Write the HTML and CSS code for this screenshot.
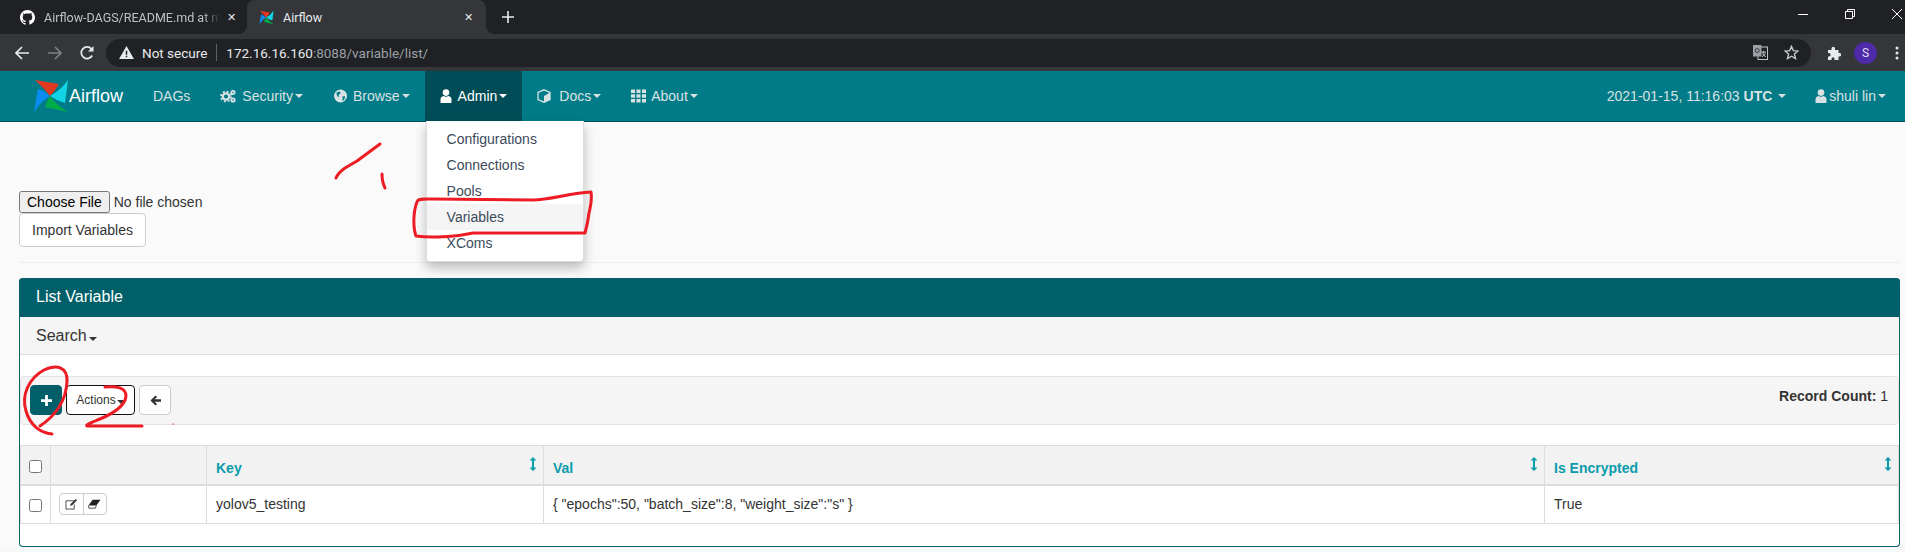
FILE: index.html
```html
<!DOCTYPE html>
<html lang="en">
<head>
	<meta charset="UTF-8" />
	<title>Airflow</title>
	<link rel="stylesheet" href="styles.css">
</head>
<body>
<svg class="sprite" width="0" height="0">
	<symbol id="pinwheel" viewBox="0 0 36 34">
		<path fill="#e43921" d="M2 1 L26 5 Q22 12 17 17 Q10 8 2 1Z"/>
		<path fill="#11d4e4" d="M35 1 L32 24 Q24 22 17 17 Q28 11 35 1Z"/>
		<path fill="#00ad46" d="M35 33 L12 28 Q14 22 17 17 Q24 27 35 33Z"/>
		<path fill="#0a8cf0" d="M1 33 L5 10 Q12 12 17 17 Q7 23 1 33Z"/>
	</symbol>
	<symbol id="user" viewBox="0 0 12 14">
		<circle cx="6" cy="3.6" r="3.3" fill="currentColor"/>
		<path fill="currentColor" d="M0.5 14 V10.5 Q0.5 7.6 3.6 7 Q6 8.6 8.4 7 Q11.5 7.6 11.5 10.5 V14Z"/>
	</symbol>
	<symbol id="sort" viewBox="0 0 8 14">
		<path fill="currentColor" d="M4 0 L7.5 3.5 H5 V10.5 H7.5 L4 14 L0.5 10.5 H3 V3.5 H0.5Z"/>
	</symbol>
</svg>

<div class="tabstrip">
	<div class="tab">
		<svg class="tab-icon" viewBox="0 0 16 16"><path fill="#fff" d="M8 0C3.6 0 0 3.6 0 8c0 3.5 2.3 6.5 5.5 7.6.4.1.5-.2.5-.4v-1.4c-2.2.5-2.7-1-2.7-1-.4-.9-.9-1.200-.9-1.200-.7-.5.1-.5.1-.5.8.1 1.200.8 1.200.8.7 1.200 1.900.9 2.300.7.1-.5.3-.9.5-1.100-1.800-.2-3.600-.9-3.600-4 0-.9.300-1.600.800-2.100-.1-.2-.4-1 .1-2.100 0 0 .7-.2 2.200.8.600-.2 1.300-.3 2-.3s1.400.1 2 .3c1.500-1 2.200-.8 2.200-.8.400 1.100.200 1.900.100 2.100.5.600.800 1.300.800 2.100 0 3.100-1.900 3.700-3.700 3.900.3.300.6.800.6 1.500v2.200c0 .2.100.5.600.4C13.700 14.500 16 11.500 16 8c0-4.400-3.600-8-8-8z"/></svg>
		<span class="tab-title tab-title-long">Airflow-DAGS/README.md at ma</span>
		<span class="tab-close">&#x2715;</span>
	</div>
	<div class="tab tab-active">
		<svg class="tab-icon"><use href="#pinwheel"/></svg>
		<span class="tab-title">Airflow</span>
		<span class="tab-close">&#x2715;</span>
	</div>
	<svg class="new-tab" viewBox="0 0 12 12"><path stroke="#e8eaed" stroke-width="1.6" d="M6 0V12M0 6H12"/></svg>
	<div class="window-controls">
		<svg class="win-icon" viewBox="0 0 10 10"><path stroke="#fff" d="M0 5.500H10"/></svg>
		<svg class="win-icon" viewBox="0 0 10 10"><path fill="none" stroke="#fff" d="M.5 2.500H7.500V9.500H.5ZM2.500 2.500V.5H9.500V7.500H7.500"/></svg>
		<svg class="win-icon" viewBox="0 0 10 10"><path stroke="#fff" d="M0 0L10 10M10 0L0 10"/></svg>
	</div>
</div>

<div class="toolbar">
	<svg class="tool-btn" viewBox="0 0 14 14"><path fill="none" stroke="#e8eaed" stroke-width="1.700" d="M14 7H1.500M7 1L1 7L7 13"/></svg>
	<svg class="tool-btn" viewBox="0 0 14 14"><path fill="none" stroke="#7c7f84" stroke-width="1.700" d="M0 7H12.500M7 1L13 7L7 13"/></svg>
	<svg class="tool-btn tool-reload" viewBox="0 0 14 14"><path fill="none" stroke="#e8eaed" stroke-width="1.700" d="M12.200 9.500A5.800 5.800 0 1 1 11.500 3"/><path fill="#e8eaed" d="M13.500 0V5.500H8Z"/></svg>
	<div class="omnibox">
		<svg class="warn" viewBox="0 0 16 14"><path fill="#e8eaed" d="M8 0L16 14H0Z"/><path fill="#202124" d="M7.200 5H8.800V9.500H7.200ZM7.200 10.500H8.800V12H7.200Z"/></svg>
		<span class="not-secure">Not secure</span>
		<span class="omni-sep"></span>
		<span class="url"><b>172.16.16.160</b>:8088/variable/list/</span>
		<span class="omni-right">
			<svg class="omni-icon" viewBox="0 0 15 15"><rect x="5" y="2" width="9.500" height="12.500" fill="none" stroke="#bdc1c6"/><rect width="8.500" height="11.500" fill="#9aa0a6"/><circle cx="4.200" cy="5.500" r="2" fill="none" stroke="#35363a"/><path stroke="#bdc1c6" d="M8 7H13M10.500 6V8M9 12L12.500 8M9.500 8L12.500 12"/></svg>
			<svg class="omni-icon" viewBox="0 0 15 15"><path fill="none" stroke="#c4c7cb" stroke-width="1.400" d="M7.500 1.300L9.300 5.600L14 6L10.400 9L11.500 13.600L7.500 11.200L3.500 13.600L4.600 9L1 6L5.700 5.600Z"/></svg>
		</span>
	</div>
	<svg class="puzzle" viewBox="0 0 14 14"><path fill="#e8eaed" d="M1 4H4.500V2.500A1.700 1.700 0 0 1 8 2.500V4H11.500V7H12.500A1.700 1.700 0 0 1 12.500 10.500H11.500V14H7.500V12.800A1.500 1.500 0 0 0 4.500 12.800V14H1V10.500H2.200A1.800 1.800 0 0 0 2.200 7H1Z"/></svg>
	<span class="avatar">S</span>
	<svg class="menu-dots" viewBox="0 0 4 14"><circle cx="2" cy="2" r="1.500" fill="#e8eaed"/><circle cx="2" cy="7" r="1.500" fill="#e8eaed"/><circle cx="2" cy="12" r="1.500" fill="#e8eaed"/></svg>
</div>

<nav class="navbar">
	<a class="brand"><svg class="brand-logo"><use href="#pinwheel"/></svg><span>Airflow</span></a>
	<ul class="nav-items">
		<li class="nav-item">DAGs</li>
		<li class="nav-item">
			<svg class="nav-icon nav-icon-cogs" viewBox="0 0 16 14"><circle cx="6" cy="7.500" r="3.200" fill="none" stroke="currentColor" stroke-width="2.200"/><circle cx="6" cy="7.500" r="5" fill="none" stroke="currentColor" stroke-width="1.800" stroke-dasharray="2 1.930"/><circle cx="13" cy="3.500" r="1.700" fill="none" stroke="currentColor" stroke-width="1.800"/><circle cx="13" cy="11" r="1.700" fill="none" stroke="currentColor" stroke-width="1.800"/></svg>
			Security<i class="caret"></i>
		</li>
		<li class="nav-item">
			<svg class="nav-icon" viewBox="0 0 14 14"><circle cx="7" cy="7" r="6.500" fill="currentColor"/><path fill="#017b87" d="M3 3.500L6.500 2.500L7 4.500L5 6L5.500 8.500L3.500 7ZM9 7.500L11.500 7L11 10.500L9 12Z"/></svg>
			Browse<i class="caret"></i>
		</li>
		<li class="nav-item nav-item-active">
			<svg class="nav-icon nav-icon-user"><use href="#user"/></svg>
			Admin<i class="caret"></i>
			<ul class="dropdown">
				<li class="dropdown-item">Configurations</li>
				<li class="dropdown-item">Connections</li>
				<li class="dropdown-item">Pools</li>
				<li class="dropdown-item dropdown-item-hover">Variables</li>
				<li class="dropdown-item">XComs</li>
			</ul>
		</li>
		<li class="nav-item">
			<svg class="nav-icon nav-icon-cube" viewBox="0 0 14 14"><path fill="none" stroke="currentColor" stroke-width="1.300" d="M7 .8L13 3.500V10.500L7 13.200L1 10.500V3.500Z"/><path fill="currentColor" d="M7 7L13 3.500V10.500L7 13.200Z"/></svg>
			Docs<i class="caret"></i>
		</li>
		<li class="nav-item">
			<svg class="nav-icon" viewBox="0 0 15 13"><path fill="currentColor" d="M0 0H4V3.500H0ZM5.500 0H9.500V3.500H5.500ZM11 0H15V3.500H11ZM0 4.750H4V8.250H0ZM5.500 4.750H9.500V8.250H5.500ZM11 4.750H15V8.250H11ZM0 9.500H4V13H0ZM5.500 9.500H9.500V13H5.500ZM11 9.500H15V13H11Z"/></svg>
			About<i class="caret"></i>
		</li>
	</ul>
	<div class="nav-right">
		<span class="clock">2021-01-15, 11:16:03 <b>UTC</b><i class="caret caret-clock"></i></span>
		<span class="account"><svg class="nav-icon nav-icon-account"><use href="#user"/></svg>shuli lin<i class="caret"></i></span>
	</div>
</nav>

<main class="content">
	<form class="import-form">
		<input class="file-input" type="file">
		<button class="btn btn-import" type="button">Import Variables</button>
	</form>
	<hr class="divider">

	<section class="panel">
		<h2 class="panel-title">List Variable</h2>
		<div class="search-bar">Search<i class="caret caret-dark"></i></div>

		<div class="well">
			<div class="well-actions">
				<button class="btn btn-add" type="button"><svg class="btn-icon" viewBox="0 0 12 12"><path fill="#fff" d="M4.500 0H7.500V4.500H12V7.500H7.500V12H4.500V7.500H0V4.500H4.500Z"/></svg></button>
				<button class="btn btn-actions" type="button">Actions<i class="caret caret-dark"></i></button>
				<button class="btn btn-back" type="button"><svg class="btn-icon" viewBox="0 0 12 12"><path fill="#333" d="M6 .5L7.700 2.200L5.100 4.700H12V7.300H5.100L7.700 9.800L6 11.500L.5 6Z"/></svg></button>
			</div>
			<div class="record-count"><b>Record Count:</b> 1</div>
		</div>

		<table class="list-table">
			<colgroup>
				<col class="col-check"><col class="col-row-actions"><col class="col-key"><col class="col-val"><col>
			</colgroup>
			<thead>
				<tr>
					<th><input class="row-check" type="checkbox"></th>
					<th></th>
					<th><div class="th-inner">Key<svg class="sort-icon"><use href="#sort"/></svg></div></th>
					<th><div class="th-inner">Val<svg class="sort-icon"><use href="#sort"/></svg></div></th>
					<th><div class="th-inner">Is Encrypted<svg class="sort-icon"><use href="#sort"/></svg></div></th>
				</tr>
			</thead>
			<tbody>
				<tr>
					<td><input class="row-check" type="checkbox"></td>
					<td class="row-actions">
						<div class="btn-group">
							<span class="btn-mini"><svg class="mini-icon" viewBox="0 0 14 13"><path fill="none" stroke="#444" d="M9.500 3H1V12H10V7"/><path fill="#333" d="M6 6.500L11.500 1L13 2.500L7.500 8L5.500 8.500Z"/></svg></span>
							<span class="btn-mini"><svg class="mini-icon" viewBox="0 0 14 11"><path fill="#222" d="M5 1H13.500L9 7H.5Z"/><path fill="none" stroke="#444" d="M.5 7L1 10H8L9 7"/></svg></span>
						</div>
					</td>
					<td>yolov5_testing</td>
					<td>{ "epochs":50, "batch_size":8, "weight_size":"s" }</td>
					<td>True</td>
				</tr>
			</tbody>
		</table>
	</section>
</main>

<!-- red marker scribbles on top of the screenshot -->
<svg class="scribbles" viewBox="0 0 1905 552">
	<g fill="none" stroke="#ed1c24" stroke-width="3" stroke-linecap="round" stroke-linejoin="round">
		<path d="M336 178Q338 173 345 168L357 161L380 144"/>
		<path d="M382 174Q382 182 385 188"/>
		<path d="M433 199C425 199 418 198 417 202C413 212 413 228 416 236C430 238 455 237 473 233L585 233Q588 222 589 213C591 205 592 198 591 192C570 193 550 200 533 200L433 199"/>
		<path d="M52 434C40 433 30 425 26 411C21 395 29 378 44 370C57 364 68 367 67 382C66 398 58 414 40 426"/>
		<path d="M105 387C118 386 126 388 126 396C125 407 112 414 100 419C93 422 85 425 87 426L142 426"/>
		<path stroke-width="1.200" d="M173 424L173.500 424"/>
	</g>
</svg>
</body>
</html>
```

FILE: styles.css
```css
html, body {
	margin: 0;
	height: 552px;
	overflow: hidden;
}
body {
	position: relative;
	font-family: "Liberation Sans", Arial, sans-serif;
	font-size: 14px;
	color: #333;
	background: #f7f8fa;
}
.sprite {
	display: block;
}

/* browser chrome */
.tabstrip {
	display: flex;
	align-items: center;
	height: 34px;
	background: #202124;
	font-family: Roboto, sans-serif;
	font-size: 12.5px;
	color: #bdc1c6;
}
.tab {
	display: flex;
	align-items: center;
	height: 34px;
	width: 247px;
	padding-left: 20px;
	box-sizing: border-box;
}
.tab-active {
	position: relative;
	width: 239px;
	padding-left: 12px;
	background: #35363a;
	border-radius: 8px 8px 0 0;
	color: #e8eaed;
}
.tab-active::before, .tab-active::after {
	content: "";
	position: absolute;
	bottom: 0;
	width: 8px;
	height: 8px;
}
.tab-active::before {
	left: -8px;
	background: radial-gradient(circle at 0 0, transparent 7.5px, #35363a 8px);
}
.tab-active::after {
	right: -8px;
	background: radial-gradient(circle at 100% 0, transparent 7.5px, #35363a 8px);
}
.tab-icon {
	width: 15px;
	height: 15px;
	flex: none;
}
.tab-title {
	margin-left: 9px;
	flex: 1;
}
.tab-title-long {
	flex: none;
	width: 176px;
	white-space: nowrap;
	-webkit-mask-image: linear-gradient(90deg, #000 90%, transparent);
	mask-image: linear-gradient(90deg, #000 90%, transparent);
}
.tab-close {
	width: 10px;
	margin: 0 12px 0 7px;
	font-size: 11px;
	color: #e8eaed;
}
.new-tab {
	width: 12px;
	height: 12px;
	margin-left: 16px;
}
.window-controls {
	display: flex;
	gap: 37px;
	margin-left: auto;
	margin-right: 3px;
	margin-bottom: 6px;
}
.win-icon {
	width: 10px;
	height: 10px;
}
.toolbar {
	display: flex;
	align-items: center;
	height: 37px;
	background: #35363a;
}
.tool-btn {
	width: 14px;
	height: 14px;
	margin-left: 14px;
	margin-right: 5px;
}
.tool-btn:first-child {
	margin-left: 15px;
}
.tool-reload {
	margin-left: 13px;
}
.omnibox {
	display: flex;
	align-items: center;
	width: 1705px;
	height: 28px;
	margin-left: 7px;
	padding: 0 10px 0 13px;
	box-sizing: border-box;
	border-radius: 14px;
	background: #202124;
	font-family: Roboto, sans-serif;
	font-size: 13.5px;
	color: #e8eaed;
}
.warn {
	width: 15px;
	height: 13px;
}
.not-secure {
	margin-left: 8px;
}
.omni-sep {
	width: 1px;
	height: 17px;
	margin: 0 9px;
	background: #5f6368;
}
.url {
	color: #9aa0a6;
}
.url b {
	font-weight: 400;
	color: #e8eaed;
}
.omni-right {
	display: flex;
	gap: 16px;
	margin-left: auto;
	margin-right: 2px;
}
.omni-icon {
	width: 15px;
	height: 15px;
}
.puzzle {
	width: 14px;
	height: 14px;
	margin-left: 16px;
}
.avatar {
	display: flex;
	align-items: center;
	justify-content: center;
	width: 23px;
	height: 22px;
	margin-left: 13px;
	border-radius: 50%;
	background: #4c2aa8;
	font-family: Roboto, sans-serif;
	font-size: 12px;
	color: #e0dcf5;
}
.menu-dots {
	width: 4px;
	height: 14px;
	margin-left: 18px;
}

/* airflow navbar */
.navbar {
	display: flex;
	height: 51px;
	box-sizing: border-box;
	border-bottom: 1px solid #00505a;
	background: #017b87;
	color: #d9e2e3;
}
.brand {
	display: flex;
	align-items: center;
	width: 138px;
	padding-left: 33px;
	box-sizing: border-box;
	color: #fff;
}
.brand span {
	font-size: 18px;
}
.brand-logo {
	width: 36px;
	height: 34px;
}
.nav-items {
	display: flex;
	margin: 0;
	padding: 0;
	list-style: none;
}
.nav-item {
	position: relative;
	display: flex;
	align-items: center;
	padding: 0 15px;
}
.nav-item-active {
	background: #004d57;
	color: #fff;
}
.nav-icon {
	width: 15px;
	height: 14px;
	margin-right: 5px;
}
.nav-icon-cogs {
	width: 16px;
	margin-right: 6px;
}
.nav-icon-cube {
	width: 14px;
	margin-right: 8px;
}
.nav-icon-user {
	width: 12px;
	margin-right: 6px;
}
.nav-icon-account {
	width: 12px;
	margin-right: 2px;
}
.caret {
	display: inline-block;
	width: 0;
	height: 0;
	margin-left: 2px;
	border-top: 4px solid currentColor;
	border-left: 4px solid transparent;
	border-right: 4px solid transparent;
}
.caret-clock {
	margin-left: 6px;
}
.caret-dark {
	color: #333;
}
.nav-right {
	display: flex;
	align-items: center;
	gap: 29px;
	margin-left: auto;
	margin-right: 19px;
}
.clock {
	display: flex;
	align-items: center;
	white-space: pre;
}
.account {
	display: flex;
	align-items: center;
}
.dropdown {
	position: absolute;
	z-index: 2;
	top: 50px;
	left: 1px;
	width: 158px;
	margin: 0;
	padding: 5px 0;
	list-style: none;
	background: #fff;
	border-radius: 0 0 4px 4px;
	box-shadow: 0 6px 12px rgba(0, 0, 0, .25);
	border: 1px solid #ddd;
	border-top: 0;
	box-sizing: border-box;
	color: #333;
}
.dropdown-item {
	height: 26px;
	padding-left: 20px;
	line-height: 26px;
	color: #3b4a5a;
}
.dropdown-item-hover {
	background: #f5f5f5;
}

/* page */
.content {
	padding: 69px 5px 0 19px;
	background: #fafafa;
	height: 355px;
}
.import-form {
	display: flex;
	flex-direction: column;
	align-items: flex-start;
}
.file-input {
	height: 22px;
	font-family: "Liberation Sans", Arial, sans-serif;
	font-size: 14px;
	color: #333;
}
.btn {
	font-family: "Liberation Sans", Arial, sans-serif;
	font-size: 14px;
	color: #333;
	background: #fff;
	border: 1px solid #ccc;
	border-radius: 4px;
	padding: 0;
	box-sizing: border-box;
}
.btn-import {
	width: 127px;
	height: 34px;
}
.divider {
	height: 1px;
	margin: 15px 0 15px;
	border: 0;
	background: #eee;
}
.panel {
	display: flow-root;
	height: 269px;
	box-sizing: border-box;
	border: 1px solid #00626b;
	border-top: 0;
	border-radius: 4px;
	background: #fff;
}
.panel-title {
	height: 39px;
	margin: 0 -1px;
	padding: 0 0 0 17px;
	border-radius: 4px 4px 0 0;
	background: #005f69;
	font-size: 16px;
	font-weight: 400;
	line-height: 38px;
	color: #fff;
}
.search-bar {
	height: 38px;
	padding-left: 16px;
	border-bottom: 1px solid #ddd;
	box-sizing: border-box;
	background: #f5f5f5;
	font-size: 16px;
	line-height: 37px;
}
.well {
	display: flex;
	justify-content: space-between;
	height: 49px;
	margin-top: 21px;
	padding: 8px 10px 0 9px;
	box-sizing: border-box;
	border: 1px solid #e3e3e3;
	border-radius: 4px;
	background: #f5f5f5;
}
.well-actions {
	display: flex;
	gap: 4px;
	align-items: flex-start;
}
.btn-add, .btn-back {
	display: flex;
	align-items: center;
	justify-content: center;
	width: 32px;
	height: 30px;
}
.btn-add {
	background: #005f69;
	border-color: #005f69;
}
.btn-actions {
	width: 69px;
	height: 30px;
	border-color: #111;
	font-size: 12px;
}
.btn-actions .caret {
	margin-left: 1px;
}
.btn-icon {
	width: 11px;
	height: 11px;
}
.record-count {
	margin-top: 3px;
}
.list-table {
	width: 100%;
	margin-top: 20px;
	table-layout: fixed;
	border-collapse: collapse;
}
.col-check {
	width: 30px;
}
.col-row-actions {
	width: 156px;
}
.col-key {
	width: 337px;
}
.col-val {
	width: 1001px;
}
.list-table th, .list-table td {
	border: 1px solid #ddd;
	padding: 6px 9px 0;
	text-align: left;
}
.list-table th {
	height: 39px;
	box-sizing: border-box;
	background: #f2f2f2;
	border-bottom-width: 2px;
	color: #0a9cab;
}
.list-table td {
	height: 39px;
	box-sizing: border-box;
	padding-top: 0;
}
.list-table td:first-child {
	padding: 0;
	text-align: center;
}
.list-table th:first-child {
	padding: 11px 0 0;
	text-align: center;
	vertical-align: top;
}
.list-table .row-actions {
	padding-left: 8px;
}
.th-inner {
	display: flex;
	justify-content: space-between;
	align-items: flex-start;
	height: 26px;
	line-height: 26px;
}
.sort-icon {
	width: 8px;
	height: 14px;
	margin: 2px -3px 0 0;
	color: #0a9cab;
}
.row-check {
	display: inline-block;
	width: 13px;
	height: 13px;
	margin: 0;
	vertical-align: middle;
}
.btn-group {
	display: flex;
	width: 48px;
	height: 22px;
	box-sizing: border-box;
	border: 1px solid #ccc;
	border-radius: 4px;
	background: #fff;
}
.btn-mini {
	display: flex;
	flex: 1;
	align-items: center;
	justify-content: center;
}
.btn-mini + .btn-mini {
	border-left: 1px solid #ccc;
}
.mini-icon {
	width: 13px;
	height: 12px;
}

.scribbles {
	position: absolute;
	z-index: 3;
	top: 0;
	left: 0;
	width: 1905px;
	height: 552px;
	pointer-events: none;
}
```
